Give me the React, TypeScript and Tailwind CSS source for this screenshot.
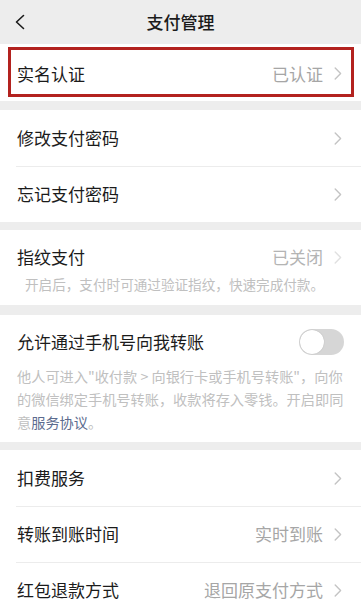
import React from "react";

const font = { fontFamily: '"Noto Sans CJK SC", "Noto Sans", sans-serif' };

function Chevron({ light = false }: { light?: boolean }) {
  return (
    <svg width="8" height="13" viewBox="0 0 8 13" className="ml-[11px] shrink-0">
      <path d="M1.2 1 L6.6 6.5 L1.2 12" fill="none" stroke={light ? "#e0e0e0" : "#c4c4c4"} strokeWidth="1.4" strokeLinecap="round" strokeLinejoin="round" />
    </svg>
  );
}

function Row({ label, value, divider = false }: { label: string; value?: string; divider?: boolean }) {
  return (
    <div className="relative">
      <div className="flex items-center h-[56px] pl-[17px] pr-[19px]">
        <span className="text-[17px] text-[#1b1b1b] flex-1 whitespace-nowrap">{label}</span>
        {value && <span className="text-[17px] text-[#a6a6a6] whitespace-nowrap">{value}</span>}
        <Chevron />
      </div>
      {divider && <div className="absolute top-0 left-[16px] right-0 h-px bg-[#ececec]" />}
    </div>
  );
}

export default function App() {
  return (
    <div className="w-[361px] h-[600px] overflow-hidden bg-[#ededed]" style={font}>
      {/* header */}
      <div className="relative h-[44px] flex items-center justify-center">
        <svg width="12" height="16" viewBox="0 0 12 16" className="absolute left-[14px] top-[14px]">
          <path d="M9.5 1.5 L2.5 8 L9.5 14.5" fill="none" stroke="#1b1b1b" strokeWidth="1.6" strokeLinecap="round" strokeLinejoin="round" />
        </svg>
        <span className="text-[17px] font-medium text-[#1b1b1b]">支付管理</span>
      </div>

      {/* card 1 */}
      <div className="relative bg-white">
        <div className="flex items-center h-[57px] pt-[2px] pl-[17px] pr-[19px]">
          <span className="text-[17px] text-[#1b1b1b] flex-1">实名认证</span>
          <span className="text-[17px] text-[#a6a6a6]">已认证</span>
          <Chevron />
        </div>
        <div className="absolute left-[8px] right-[7px] top-[3px] bottom-[4px] border-[3px] border-[#b3221f]" />
      </div>

      {/* card 2 */}
      <div className="mt-[9px] bg-white">
        <Row label="修改支付密码" />
        <Row label="忘记支付密码" divider />
      </div>

      {/* card 3 */}
      <div className="mt-[8px] bg-white h-[75px]">
        <div className="flex items-center h-[50px] pt-[4px] pl-[17px] pr-[19px]">
          <span className="text-[17px] text-[#1b1b1b] flex-1">指纹支付</span>
          <span className="text-[17px] text-[#b4b4b4]">已关闭</span>
          <Chevron light />
        </div>
        <div className="pl-[25px] -mt-[3px] text-[13.6px] leading-[14px] text-[#c0c0c0] whitespace-nowrap">开启后，支付时可通过验证指纹，快速完成付款。</div>
      </div>

      {/* card 4 */}
      <div className="mt-[10px] bg-white h-[127px]">
        <div className="flex items-center h-[54px] pl-[17px] pr-[17px]">
          <span className="text-[17px] text-[#1b1b1b] flex-1">允许通过手机号向我转账</span>
          <div className="relative w-[45px] h-[26px] rounded-full bg-[#d6d6d6]">
            <div className="absolute left-[1px] top-[1px] w-[24px] h-[24px] rounded-full bg-white shadow-[0_0_1px_rgba(0,0,0,0.25)]" />
          </div>
        </div>
        <div className="pl-[17px] -mt-[4px] text-[14.2px] leading-[23px] text-[#c0c0c0] whitespace-nowrap">
          <div>他人可进入"收付款 &gt; 向银行卡或手机号转账"，向你</div>
          <div>的微信绑定手机号转账，收款将存入零钱。开启即同</div>
          <div>意<span className="text-[#5c6b8e]">服务协议</span>。</div>
        </div>
      </div>

      {/* card 5 */}
      <div className="mt-[8px] bg-white">
        <Row label="扣费服务" />
        <Row label="转账到账时间" value="实时到账" divider />
        <Row label="红包退款方式" value="退回原支付方式" divider />
      </div>
    </div>
  );
}
